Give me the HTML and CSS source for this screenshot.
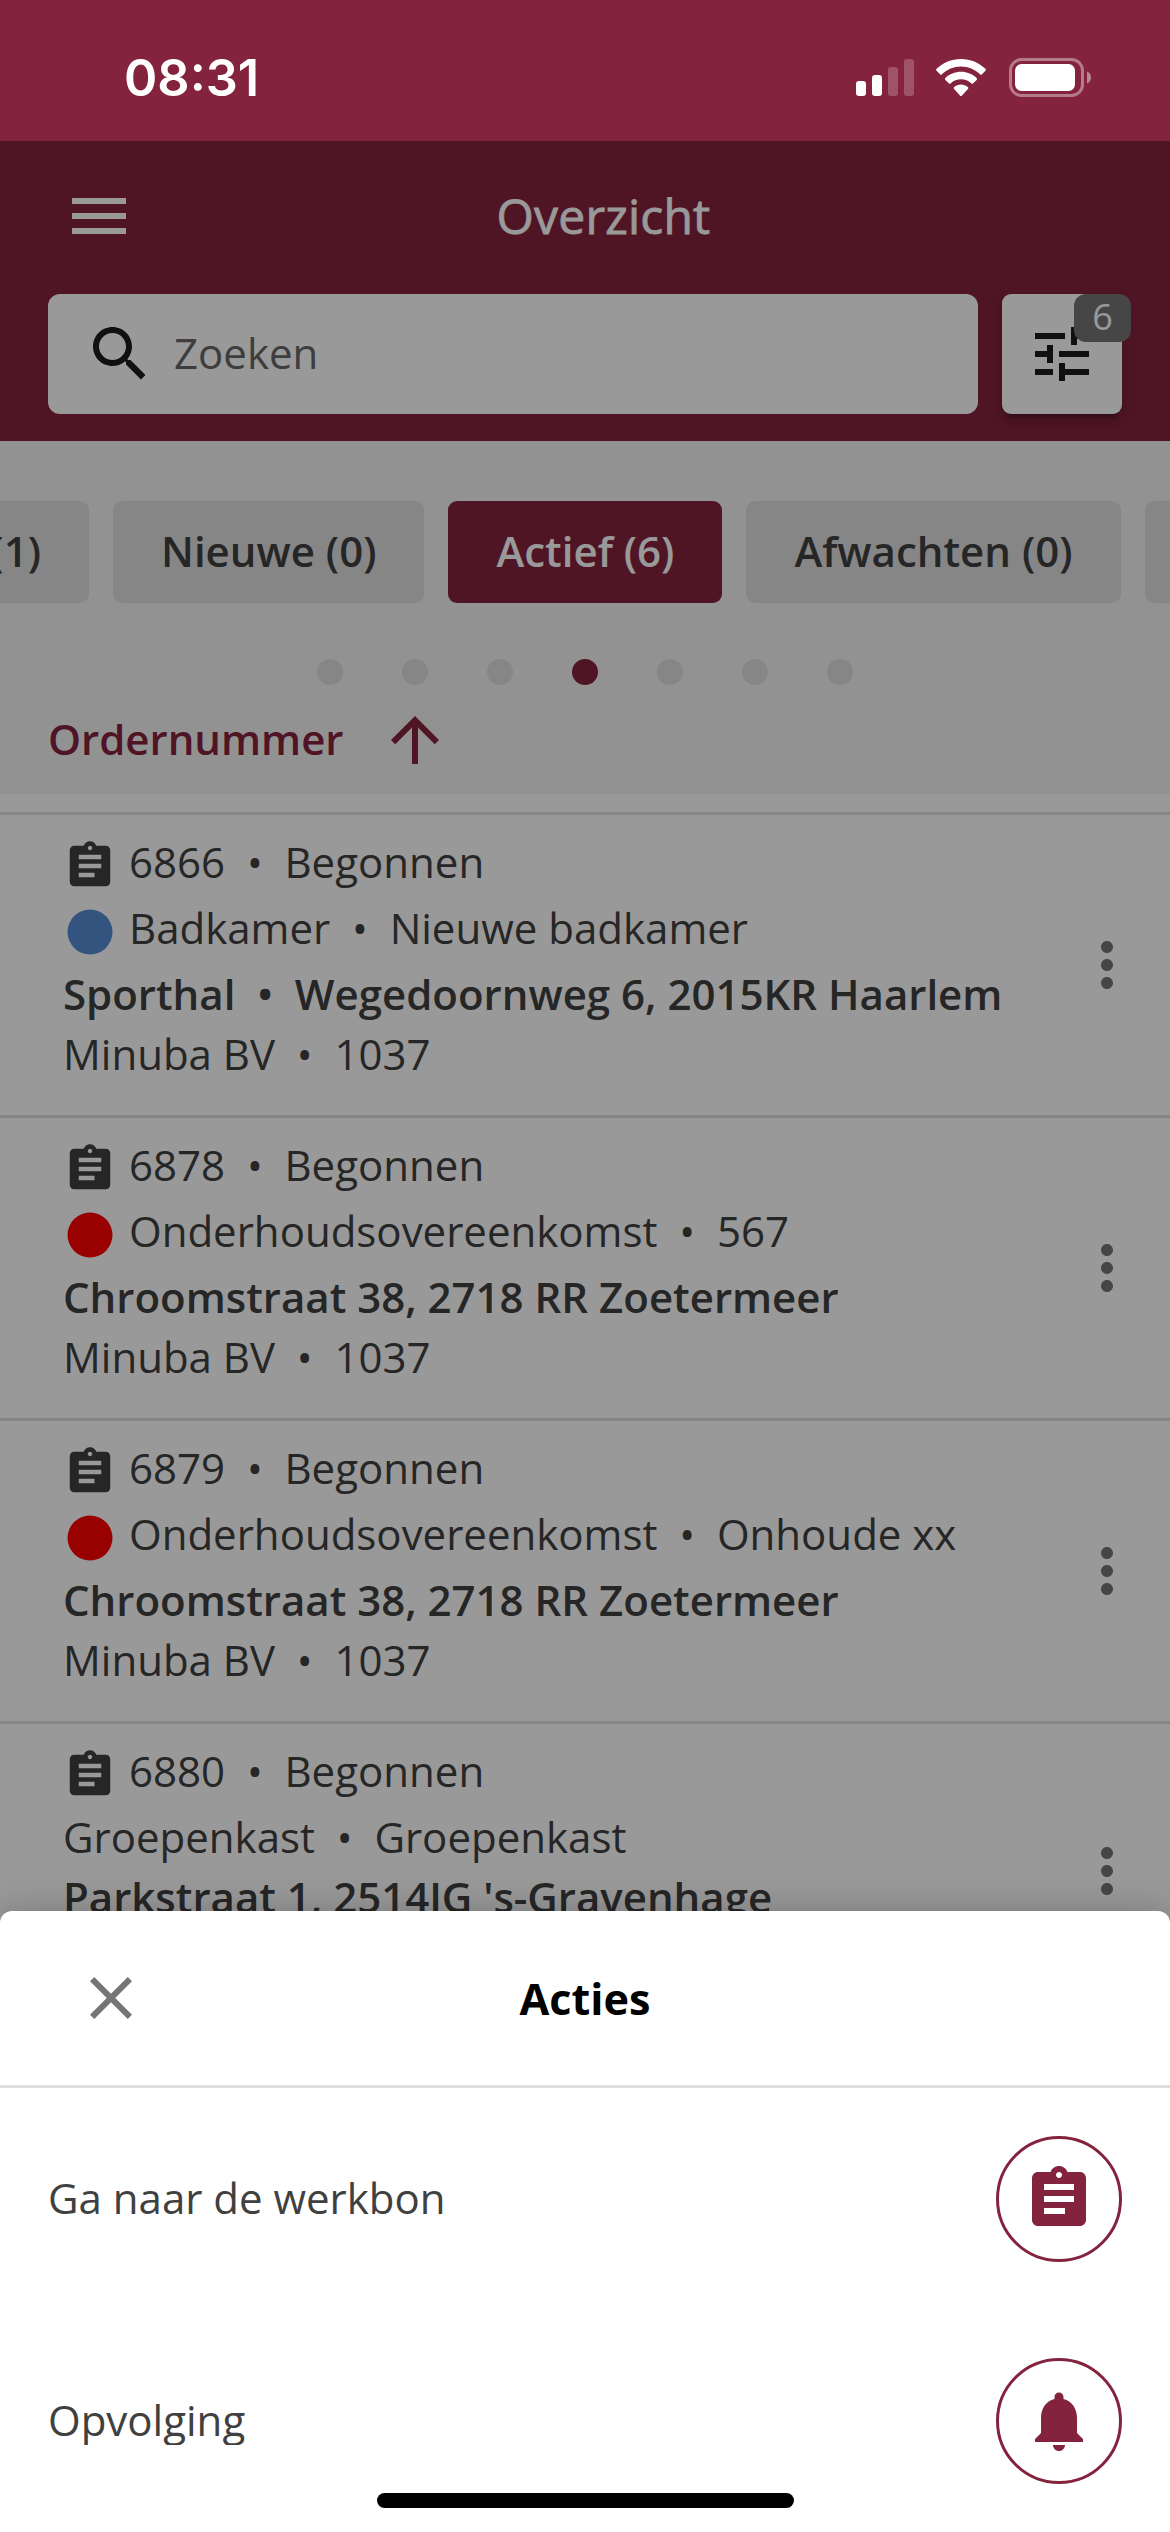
FILE: index.html
```html
<!DOCTYPE html>
<html lang="nl">
<head>
<meta charset="utf-8">
<title>Overzicht</title>
<link rel="stylesheet" href="styles.css">
</head>
<body>
<svg class="sprite" aria-hidden="true">
  <symbol id="clipboard" viewBox="0 0 24 24"><path d="M19 3h-4.18C14.4 1.84 13.3 1 12 1c-1.3 0-2.4.84-2.82 2H5c-1.1 0-2 .9-2 2v14c0 1.1.9 2 2 2h14c1.1 0 2-.9 2-2V5c0-1.1-.9-2-2-2zm-7 0c.55 0 1 .45 1 1s-.45 1-1 1-1-.45-1-1 .45-1 1-1zm2 14H7v-2h7v2zm3-4H7v-2h10v2zm0-4H7V7h10v2z"/></symbol>
  <symbol id="circle" viewBox="0 0 24 24"><circle cx="12" cy="12" r="10"/></symbol>
  <symbol id="more" viewBox="0 0 24 24"><path d="M12 8c1.1 0 2-.9 2-2s-.9-2-2-2-2 .9-2 2 .9 2 2 2zm0 2c-1.100 0-2 .9-2 2s.9 2 2 2 2-.9 2-2-.9-2-2-2zm0 6c-1.100 0-2 .9-2 2s.9 2 2 2 2-.9 2-2-.9-2-2-2z"/></symbol>
</svg>
<div class="screen">
  <div class="statusbar">
    <span class="time">08:31</span>
    <div class="status-icons">
      <svg class="signal" viewBox="0 0 58 40"><rect x="0" y="24" width="10" height="15" rx="3"/><rect x="16" y="18" width="10" height="21" rx="3"/><rect class="faint" x="32" y="10" width="10" height="29" rx="3"/><rect class="faint" x="48" y="2" width="10" height="37" rx="3"/></svg>
      <svg class="wifi" viewBox="0 0 50 40"><path d="M25 2C15.600 2 7 5.700.6 11.800a1.400 1.400 0 0 0 0 2l3.400 3.400a1.400 1.400 0 0 0 2 0C11 12.400 17.600 9.500 25 9.500s14 2.900 19 7.700a1.400 1.400 0 0 0 2 0l3.400-3.400a1.400 1.400 0 0 0 0-2C43 5.700 34.400 2 25 2z"/><path d="M25 14.700c-6 0-11.500 2.300-15.600 6.200a1.400 1.400 0 0 0 0 2l3.400 3.400a1.400 1.400 0 0 0 2 0c2.700-2.500 6.200-4 10.200-4s7.500 1.500 10.200 4a1.400 1.400 0 0 0 2 0l3.400-3.400a1.400 1.400 0 0 0 0-2C36.500 17 31 14.700 25 14.700z"/><path d="M25 27.500c-2.600 0-5 1-6.800 2.500a1.400 1.400 0 0 0-.1 2.100l5.900 6.300a1.400 1.400 0 0 0 2 0l5.900-6.300a1.400 1.400 0 0 0-.1-2.100C30 28.500 27.600 27.500 25 27.500z"/></svg>
      <svg class="battery" viewBox="0 0 82 40"><rect class="case" x="1.500" y="2.500" width="72" height="36" rx="11"/><rect x="6" y="7" width="60" height="27" rx="6.500"/><path class="nub" d="M78 14.500c2.500 1 4 3.300 4 6s-1.500 5-4 6z"/></svg>
    </div>
  </div>

  <div class="app">
    <header class="header">
      <div class="titlebar">
        <svg class="icon" viewBox="0 0 24 24"><path d="M3 18h18v-2H3v2zm0-5h18v-2H3v2zm0-7v2h18V6H3z"/></svg>
        <h1 class="title">Overzicht</h1>
      </div>
      <div class="searchrow">
        <div class="search">
          <svg class="icon" viewBox="0 0 24 24"><path d="M15.500 14h-.79l-.28-.27C15.410 12.590 16 11.110 16 9.500 16 5.910 13.090 3 9.500 3S3 5.910 3 9.500 5.910 16 9.500 16c1.610 0 3.090-.59 4.230-1.570l.27.28v.79l5 4.990L20.490 19l-4.990-5zm-6 0C7.010 14 5 11.990 5 9.500S7.010 5 9.500 5 14 7.010 14 9.500 11.990 14 9.500 14z"/></svg>
          <span class="placeholder">Zoeken</span>
        </div>
        <div class="filter">
          <svg class="icon" viewBox="0 0 24 24"><path d="M3 17v2h6v-2H3zM3 5v2h10V5H3zm10 16v-2h8v-2h-8v-2h-2v6h2zM7 9v2H3v2h4v2h2V9H7zm14 4v-2H11v2h10zm-6-4h2V7h4V5h-4V3h-2v6z"/></svg>
          <span class="badge">6</span>
        </div>
      </div>
    </header>

    <section class="controls">
      <nav class="chips">
        <div class="chip chip-first">(1)</div>
        <div class="chip">Nieuwe (0)</div>
        <div class="chip active">Actief (6)</div>
        <div class="chip">Afwachten (0)</div>
        <div class="chip chip-last"></div>
      </nav>
      <div class="dots"><i></i><i></i><i></i><i class="on"></i><i></i><i></i><i></i></div>
      <div class="sort">
        <span>Ordernummer</span>
        <svg class="icon" viewBox="0 0 24 24"><path d="M4 12l1.410 1.410L11 7.830V20h2V7.830l5.580 5.590L20 12l-8-8-8 8z"/></svg>
      </div>
    </section>

    <main class="orders">
      <article class="order">
        <div class="lines">
          <div class="line with-icon"><svg class="small"><use href="#clipboard"/></svg><span>6866&nbsp; •&nbsp; Begonnen</span></div>
          <div class="line with-icon"><svg class="small blue"><use href="#circle"/></svg><span>Badkamer&nbsp; •&nbsp; Nieuwe badkamer</span></div>
          <div class="line strong">Sporthal&nbsp; •&nbsp; Wegedoornweg 6, 2015KR Haarlem</div>
          <div class="line">Minuba BV&nbsp; •&nbsp; 1037</div>
        </div>
        <svg class="icon more"><use href="#more"/></svg>
      </article>
      <article class="order">
        <div class="lines">
          <div class="line with-icon"><svg class="small"><use href="#clipboard"/></svg><span>6878&nbsp; •&nbsp; Begonnen</span></div>
          <div class="line with-icon"><svg class="small red"><use href="#circle"/></svg><span>Onderhoudsovereenkomst&nbsp; •&nbsp; 567</span></div>
          <div class="line strong">Chroomstraat 38, 2718 RR Zoetermeer</div>
          <div class="line">Minuba BV&nbsp; •&nbsp; 1037</div>
        </div>
        <svg class="icon more"><use href="#more"/></svg>
      </article>
      <article class="order">
        <div class="lines">
          <div class="line with-icon"><svg class="small"><use href="#clipboard"/></svg><span>6879&nbsp; •&nbsp; Begonnen</span></div>
          <div class="line with-icon"><svg class="small red"><use href="#circle"/></svg><span>Onderhoudsovereenkomst&nbsp; •&nbsp; Onhoude xx</span></div>
          <div class="line strong">Chroomstraat 38, 2718 RR Zoetermeer</div>
          <div class="line">Minuba BV&nbsp; •&nbsp; 1037</div>
        </div>
        <svg class="icon more"><use href="#more"/></svg>
      </article>
      <article class="order">
        <div class="lines">
          <div class="line with-icon"><svg class="small"><use href="#clipboard"/></svg><span>6880&nbsp; •&nbsp; Begonnen</span></div>
          <div class="line">Groepenkast&nbsp; •&nbsp; Groepenkast</div>
          <div class="line strong">Parkstraat 1, 2514JG 's-Gravenhage</div>
          <div class="line"></div>
        </div>
        <svg class="icon more"><use href="#more"/></svg>
      </article>
    </main>
    <div class="scrim"></div>
  </div>

  <section class="sheet">
    <div class="sheet-head">
      <svg class="icon close" viewBox="0 0 24 24"><path d="M19 6.410L17.590 5 12 10.590 6.410 5 5 6.410 10.590 12 5 17.590 6.410 19 12 13.410 17.590 19 19 17.590 13.410 12z"/></svg>
      <h2 class="sheet-title">Acties</h2>
    </div>
    <div class="action">
      <span class="action-label">Ga naar de werkbon</span>
      <span class="round"><svg class="icon"><use href="#clipboard"/></svg></span>
    </div>
    <div class="action">
      <span class="action-label">Opvolging</span>
      <span class="round"><svg class="icon" viewBox="0 0 24 24"><path d="M12 22c1.100 0 2-.9 2-2h-4c0 1.100.89 2 2 2zm6-6v-5c0-3.070-1.640-5.640-4.500-6.320V4c0-.83-.67-1.500-1.500-1.500s-1.500.67-1.500 1.500v.68C7.630 5.360 6 7.920 6 11v5l-2 2v1h16v-1l-2-2z"/></svg></span>
    </div>
    <div class="home"></div>
  </section>
</div>
</body>
</html>
```
FILE: styles.css
```css
* { box-sizing: border-box; }
body {
  margin: 0;
  font-family: "Open Sans", "Noto Sans", sans-serif;
  font-size: 42px;
  line-height: 60px;
  color: #404040;
}
h1, h2 { margin: 0; }
svg { display: block; flex: none; }
.sprite { position: absolute; width: 0; height: 0; }
.icon { width: 72px; height: 72px; fill: currentColor; }
.screen {
  position: relative;
  display: flex;
  flex-direction: column;
  width: 1170px;
  height: 2532px;
  overflow: hidden;
  background: #fff;
}

/* status bar */
.statusbar {
  display: flex;
  justify-content: space-between;
  align-items: center;
  height: 141px;
  padding: 14px 79px 0 124px;
  background: #84233e;
  color: #fff;
}
.time { font: 600 50.5px/61px Inter, sans-serif; }
.status-icons { display: flex; height: 41px; fill: #fff; }
.signal { width: 58px; height: 40px; margin-right: 22px; }
.wifi { width: 50px; height: 40px; margin-right: 23px; }
.battery { width: 82px; height: 40px; }
.faint { opacity: .22; }
.case { fill: none; stroke: #fff; stroke-width: 3; opacity: .4; }
.nub { opacity: .45; }

/* app */
.app { position: relative; flex: 1; min-height: 0; overflow: hidden; }
.scrim { position: absolute; inset: 0; background: rgba(0, 0, 0, .4); }
.header { height: 300px; padding-top: 39px; background: #84233e; color: #fff; }
.titlebar { display: flex; align-items: center; height: 72px; padding: 0 98px 0 63px; }
.title {
  flex: 1;
  padding-bottom: 1px;
  text-align: center;
  font-size: 48px;
  font-weight: 500;
  letter-spacing: .2px;
  -webkit-text-stroke: .8px currentColor;
}
.searchrow { display: flex; gap: 24px; padding: 42px 48px 0; }
.search {
  display: flex;
  flex: 1;
  align-items: center;
  gap: 18px;
  height: 120px;
  padding-left: 36px;
  border-radius: 12px;
  background: #fff;
  color: #1c1c1c;
}
.placeholder { padding-bottom: 2px; color: #666; }
.filter {
  position: relative;
  display: flex;
  align-items: center;
  justify-content: center;
  width: 120px;
  height: 120px;
  border-radius: 9px;
  background: #fff;
  color: #1c1c1c;
  box-shadow: 0 9px 3px -6px rgba(0,0,0,.2), 0 6px 6px rgba(0,0,0,.14), 0 3px 15px rgba(0,0,0,.12);
}
.badge {
  position: absolute;
  top: 0;
  right: -9px;
  width: 57px;
  height: 48px;
  border-radius: 12px;
  background: #757575;
  color: #fff;
  font-size: 36px;
  line-height: 46px;
  text-align: center;
}

.controls { height: 353px; padding-top: 60px; background: #f4f4f4; }
.chips { display: flex; gap: 24px; overflow: hidden; }
.chip {
  flex: none;
  height: 102px;
  padding: 0 48px;
  border-radius: 9px;
  background: #e0e0e0;
  font-weight: 600;
  line-height: 100px;
  white-space: nowrap;
}
.chip.active { background: #84233e; color: #fff; }
.chip-first { display: flex; justify-content: flex-end; width: 89px; padding-left: 0; border-radius: 0 9px 9px 0; }
.chip-last { width: 120px; }
.dots { display: flex; justify-content: center; gap: 59px; padding-top: 56px; }
.dots i { width: 26px; height: 26px; border-radius: 50%; background: #e0e0e0; }
.dots .on { background: #84233e; }
.sort {
  display: flex;
  align-items: center;
  gap: 35px;
  height: 72px;
  margin-top: 19px;
  padding-left: 48px;
  color: #84233e;
  font-weight: 600;
}
.sort span { padding-bottom: 2px; }

/* order list */
.orders { padding-top: 18px; }
.order {
  display: flex;
  align-items: center;
  padding: 17px 27px 31px 63px;
  border-top: 3px solid #dedede;
}
.lines { flex: 1; }
.line { height: 60px; white-space: nowrap; }
.with-icon { display: flex; gap: 12px; height: 66px; }
.small { width: 54px; height: 54px; margin-top: 7px; fill: currentColor; }
.blue { fill: #558cd4; }
.red { fill: #f00; }
.strong { font-weight: 600; }
.more { margin-top: 14px; color: #757575; }

/* bottom sheet */
.sheet {
  position: absolute;
  left: 0;
  right: 0;
  bottom: 0;
  height: 621px;
  border-radius: 12px 12px 0 0;
  background: #fff;
  box-shadow: 0 0 36px rgba(0, 0, 0, .22);
}
.sheet-head {
  display: flex;
  align-items: center;
  height: 177px;
  padding: 0 147px 0 75px;
  border-bottom: 3px solid #dedede;
}
.close { color: #757575; }
.sheet-title { flex: 1; padding-top: 1px; color: #000; font-size: 43.2px; font-weight: 700; text-align: center; }
.action {
  display: flex;
  align-items: center;
  justify-content: space-between;
  height: 222px;
  padding: 0 48px;
}
.action-label { height: 48px; overflow: hidden; line-height: 46px; }
.round {
  display: flex;
  align-items: center;
  justify-content: center;
  width: 126px;
  height: 126px;
  border: 3px solid #84233e;
  border-radius: 50%;
  color: #84233e;
}
.home {
  position: absolute;
  left: 377px;
  bottom: 24px;
  width: 417px;
  height: 15px;
  border-radius: 8px;
  background: #000;
}
```
